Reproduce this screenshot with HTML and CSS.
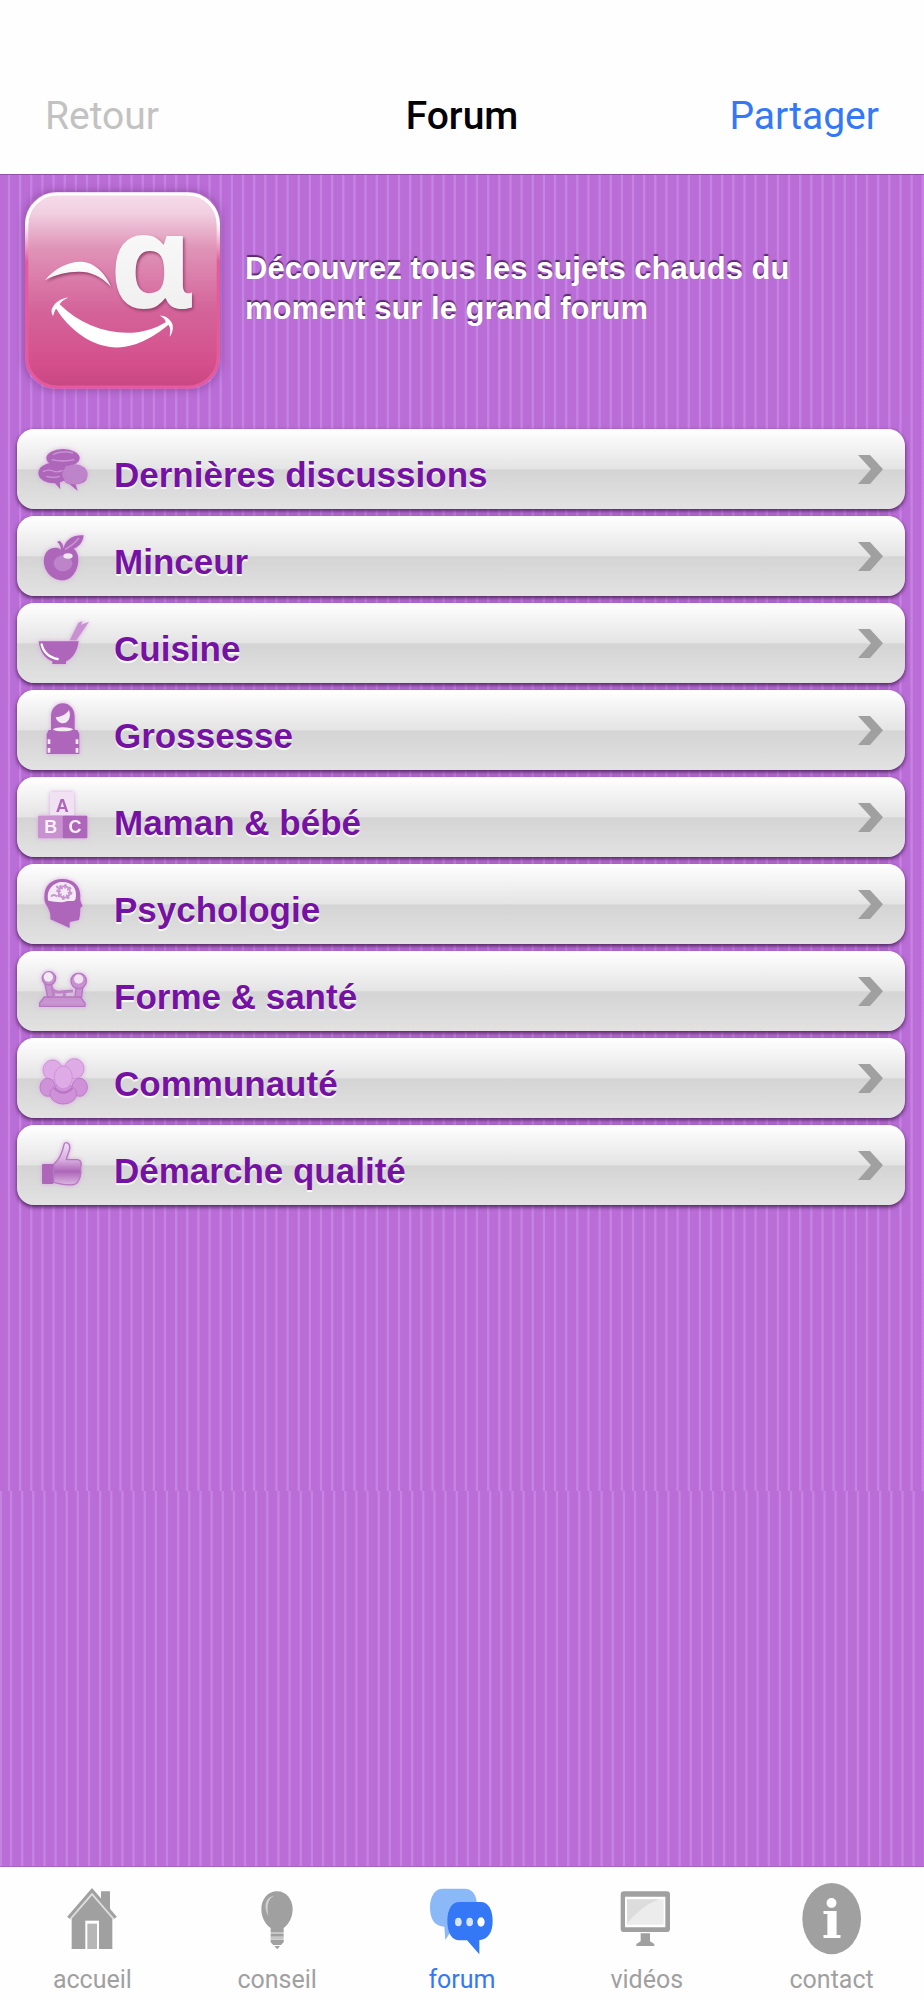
FILE: index.html
```html
<!DOCTYPE html>
<html lang="fr">
<head>
  <meta charset="UTF-8">
  <meta name="viewport" content="width=device-width, initial-scale=1">
  <title>Forum</title>
  <link rel="stylesheet" href="styles.css">
</head>
<body>
  <header class="navbar">
    <button class="nav-btn" type="button" disabled>Retour</button>
    <h1 class="nav-title">Forum</h1>
    <button class="nav-btn nav-share" type="button">Partager</button>
  </header>

  <main class="content">
    <div class="intro">
      <svg class="logo" viewBox="0 0 585 590" aria-hidden="true">
        <defs>
          <linearGradient id="pink" x1="0" y1="0" x2="0" y2="1">
            <stop offset="0" stop-color="#f6dcea"/>
            <stop offset=".1" stop-color="#f1cfe0"/>
            <stop offset=".28" stop-color="#e094b8"/>
            <stop offset=".6" stop-color="#d4649a"/>
            <stop offset=".88" stop-color="#d44f8c"/>
            <stop offset="1" stop-color="#c84782"/>
          </linearGradient>
          <linearGradient id="edge" x1="0" y1="0" x2="0" y2="1">
            <stop offset="0" stop-color="#fff"/>
            <stop offset=".15" stop-color="#fff"/>
            <stop offset=".35" stop-color="#e45a9d"/>
            <stop offset="1" stop-color="#e45a9d"/>
          </linearGradient>
          <linearGradient id="letter" x1="0" y1="0" x2="0" y2="1">
            <stop offset="0" stop-color="#fff"/>
            <stop offset="1" stop-color="#ececec"/>
          </linearGradient>
        </defs>
        <rect x="5" y="5" width="575" height="580" rx="92" fill="url(#pink)" stroke="url(#edge)" stroke-width="10"/>
        <g class="face" fill="url(#letter)">
          <text class="logo-letter" x="378" y="346">ɑ</text>
          <path d="M60 264C90 228 130 209 166 209C205 209 240 240 258 284C225 250 195 238 160 239C125 240 95 246 60 264Z"/>
        </g>
        <path fill="#fff" d="M130 316C112 318 92 328 84 344C78 352 78 362 84 372C88 360 90 352 94 350C130 410 200 466 276 466C340 466 400 424 430 398C438 408 436 420 434 434C446 418 446 398 438 388C430 376 418 370 404 370C414 376 422 382 422 390C390 410 350 422 306 422C230 420 160 392 104 336C108 328 118 322 130 316Z"/>
      </svg>
      <p class="intro-text">Découvrez tous les sujets chauds du moment sur le grand forum</p>
    </div>

    <ul class="list">
      <li><a class="row" href="#discussions">
        <svg class="icon" viewBox="0 0 156 240" aria-hidden="true">
          <ellipse cx="78" cy="87" rx="50" ry="27"/>
          <path d="M38 98l-2 16 20-10z"/>
          <ellipse cx="50" cy="132" rx="46" ry="31"/>
          <path d="M48 156l22 25-2-24z"/>
          <ellipse class="soft" cx="114" cy="136" rx="38" ry="30"/>
          <path d="M76 140c8 34 62 34 76 0-4 12-4 22-36 26l6 20-24-20c-14-4-20-12-22-26z"/>
          <path class="line" d="M48 76q28-12 60-4M44 92q34 8 68 0M18 128q16-8 30-2t28-2M28 142q22 6 40 0"/>
        </svg>
        <span class="label">Dernières discussions</span>
        <svg class="chevron" viewBox="0 0 75 87" aria-hidden="true"><path d="M0 0h36l39 43-39 44H0l39-44z"/></svg>
      </a></li>
      <li><a class="row" href="#minceur">
        <svg class="icon" viewBox="0 0 156 240" aria-hidden="true">
          <path d="M72 101c12-12 38-12 48 10 12 28-4 82-44 82-40 0-62-42-54-70 6-26 34-34 50-22z"/>
          <path d="M78 104C82 74 104 56 140 58C138 86 116 104 78 104ZM60 78l8-4c10 8 12 18 10 30l-6-2c0-10-4-18-12-24z"/>
          <path class="line" d="M84 100q24-12 42-34"/>
          <ellipse class="soft" cx="78" cy="142" rx="28" ry="24"/>
          <ellipse class="shine" cx="93" cy="120" rx="14" ry="8"/>
        </svg>
        <span class="label">Minceur</span>
        <svg class="chevron" viewBox="0 0 75 87" aria-hidden="true"><path d="M0 0h36l39 43-39 44H0l39-44z"/></svg>
      </a></li>
      <li><a class="row" href="#cuisine">
        <svg class="icon" viewBox="0 0 156 240" aria-hidden="true">
          <path d="M5 115h120c-4 32-20 54-38 60v8H46v-8C22 166 8 144 5 115z"/>
          <path class="mid" d="M98 112L124 60l12-6-4 12 24-10-38 56z"/>
          <path class="bowl-shine" d="M14 124c4 22 22 40 48 44"/>
        </svg>
        <span class="label">Cuisine</span>
        <svg class="chevron" viewBox="0 0 75 87" aria-hidden="true"><path d="M0 0h36l39 43-39 44H0l39-44z"/></svg>
      </a></li>
      <li><a class="row" href="#grossesse">
        <svg class="icon" viewBox="0 0 156 240" aria-hidden="true">
          <path d="M42 120V80c0-54 71-54 71 0v40h8l6 12v60H29v-60l6-12z"/>
          <path class="light" d="M56 82c18-2 32-10 40-22 8 20-2 40-18 40-10 0-20-8-22-18z"/>
          <ellipse class="light" cx="78" cy="118" rx="30" ry="6"/>
          <path class="light" d="M32 148h8v14h-8zM32 174h8v14h-8zM116 148h8v14h-8zM116 174h8v14h-8z"/>
        </svg>
        <span class="label">Grossesse</span>
        <svg class="chevron" viewBox="0 0 75 87" aria-hidden="true"><path d="M0 0h36l39 43-39 44H0l39-44z"/></svg>
      </a></li>
      <li><a class="row" href="#maman">
        <svg class="icon" viewBox="0 0 156 240" aria-hidden="true">
          <rect class="pale" x="39" y="45" width="72" height="70" rx="3"/>
          <rect class="mid" x="3" y="116" width="74" height="68" rx="3"/>
          <rect x="77" y="116" width="74" height="68" rx="3"/>
          <text class="cube" x="76" y="104">A</text>
          <text class="cube white" x="41" y="168">B</text>
          <text class="cube white" x="114" y="168">C</text>
        </svg>
        <span class="label">Maman &amp; bébé</span>
        <svg class="chevron" viewBox="0 0 75 87" aria-hidden="true"><path d="M0 0h36l39 43-39 44H0l39-44z"/></svg>
      </a></li>
      <li><a class="row" href="#psychologie">
        <svg class="icon" viewBox="0 0 156 240" aria-hidden="true">
          <path d="M22 98C22 62 46 45 76 45C108 45 130 64 130 96C128 108 132 118 137 126L130 132C130 150 128 160 126 168L98 174V192L40 166C42 148 36 138 30 126C24 118 22 110 22 98Z"/>
          <path class="light" d="M34 110C26 78 50 54 76 54C106 54 122 74 116 104C112 116 98 108 88 112C74 118 50 112 34 110Z"/>
          <circle class="gear" cx="82" cy="84" r="17"/>
          <circle class="gear-dots" cx="82" cy="84" r="17"/>
          <path class="gear" d="M42 98q8-10 18 0M58 66l8 8"/>
        </svg>
        <span class="label">Psychologie</span>
        <svg class="chevron" viewBox="0 0 75 87" aria-hidden="true"><path d="M0 0h36l39 43-39 44H0l39-44z"/></svg>
      </a></li>
      <li><a class="row" href="#forme">
        <svg class="icon" viewBox="0 0 156 240" aria-hidden="true">
          <path class="mid edge" d="M22 138h108l14 18v10H8v-10z"/>
          <path class="mid edge" d="M24 100l8 38h16L44 96zM118 104l-4 34h20l4-34z"/>
          <path class="bar" d="M44 112q12 16 34 10l30-2M50 122v16M82 122v16"/>
          <circle class="mid edge" cx="36" cy="82" r="20"/>
          <circle class="light" cx="34" cy="78" r="14"/>
          <circle class="mid edge" cx="125" cy="90" r="23"/>
          <circle class="pale" cx="125" cy="84" r="14"/>
          <path class="line" d="M18 154h116"/>
        </svg>
        <span class="label">Forme &amp; santé</span>
        <svg class="chevron" viewBox="0 0 75 87" aria-hidden="true"><path d="M0 0h36l39 43-39 44H0l39-44z"/></svg>
      </a></li>
      <li><a class="row" href="#communaute">
        <svg class="icon people" viewBox="0 0 156 240" aria-hidden="true">
          <ellipse cx="47" cy="96" rx="29" ry="30"/>
          <ellipse cx="112" cy="92" rx="29" ry="30"/>
          <ellipse class="deep" cx="32" cy="148" rx="23" ry="27"/>
          <ellipse class="deep" cx="128" cy="148" rx="23" ry="27"/>
          <ellipse class="deep" cx="79" cy="168" rx="40" ry="30"/>
          <ellipse cx="79" cy="118" rx="27" ry="34"/>
          <path class="lip" d="M52 150q27 28 54 0"/>
        </svg>
        <span class="label">Communauté</span>
        <svg class="chevron" viewBox="0 0 75 87" aria-hidden="true"><path d="M0 0h36l39 43-39 44H0l39-44z"/></svg>
      </a></li>
      <li><a class="row" href="#qualite">
        <svg class="icon" viewBox="0 0 156 240" aria-hidden="true">
          <defs>
            <linearGradient id="thumb" x1="0" y1="0" x2="0" y2="1">
              <stop offset="0" stop-color="#f0e0f3"/>
              <stop offset=".4" stop-color="#d9b0df"/>
              <stop offset=".68" stop-color="#ad66b9"/>
              <stop offset="1" stop-color="#dcb8e2"/>
            </linearGradient>
          </defs>
          <rect x="15" y="117" width="34" height="60" rx="3"/>
          <path class="edge" fill="url(#thumb)" d="M50 118C66 106 76 84 82 56C88 48 100 56 98 70C96 84 90 92 88 104H122C134 106 134 118 131 126C134 146 128 174 112 178C90 184 66 176 50 172Z"/>
        </svg>
        <span class="label">Démarche qualité</span>
        <svg class="chevron" viewBox="0 0 75 87" aria-hidden="true"><path d="M0 0h36l39 43-39 44H0l39-44z"/></svg>
      </a></li>
    </ul>
  </main>

  <nav class="tabs">
    <a class="tab" href="#accueil">
      <svg class="tab-icon" viewBox="0 0 240 270" aria-hidden="true">
        <path d="M147 110V73h27v62zM120 70l68 80h-7v96H59v-96h-7z"/>
        <path class="roof-gap" d="M54 156l66-76 66 76"/>
        <path class="roof" d="M49 152l71-82 71 82"/>
        <path fill="#fff" d="M100 161h41v86h-41z"/>
        <path fill="#b6b6b6" d="M106 170h29v76h-29z"/>
      </svg>
      <span>accueil</span>
    </a>
    <a class="tab" href="#conseil">
      <svg class="tab-icon" viewBox="0 0 240 270" aria-hidden="true">
        <path d="M120 73c28 0 47 24 47 54 0 28-15 48-27 56v12h-39v-12c-13-8-28-28-28-56 0-30 19-54 47-54z"/>
        <path d="M101 201h39v8h-39zM101 218h39v8l-8 8h-23l-8-8zM112 237h17l-8 10z"/>
        <path fill="#c6c6c6" d="M101 195h39v6h-39zM101 209h39v9h-39z"/>
        <path fill="#d0d0d0" d="M112 86c-16 6-24 26-18 60-14-22-12-56 18-60z"/>
      </svg>
      <span>conseil</span>
    </a>
    <a class="tab active" href="#forum">
      <svg class="tab-icon" viewBox="0 0 240 270" aria-hidden="true">
        <path fill="#8bb9f8" d="M62 65h66c22 0 37 18 37 50 0 40-15 64-42 64H96l-26 40-3-40C40 178 24 158 24 122 24 86 40 65 62 65z"/>
        <path d="M112 105h64c22 0 36 22 36 57s-14 54-40 58v42l-37-42h-23c-22 0-36-22-36-58s14-57 36-57z"/>
        <ellipse fill="#d6e6ff" cx="109" cy="165" rx="10" ry="13"/>
        <ellipse fill="#d6e6ff" cx="143" cy="165" rx="10" ry="13"/>
        <ellipse fill="#fff" cx="177" cy="165" rx="11" ry="14"/>
      </svg>
      <span>forum</span>
    </a>
    <a class="tab" href="#videos">
      <svg class="tab-icon" viewBox="0 0 240 270" aria-hidden="true">
        <rect x="41" y="73" width="148" height="122" rx="10"/>
        <path fill="#fff" d="M54 89h121v92H54z"/>
        <path fill="#ececec" d="M60 97h110v76H60z"/>
        <path fill="#dcdcdc" d="M60 97h96q-50 18-96 72z"/>
        <path d="M101 199h28v24l13 8v6H88v-6l13-8z"/>
      </svg>
      <span>vidéos</span>
    </a>
    <a class="tab" href="#contact">
      <svg class="tab-icon" viewBox="0 0 240 270" aria-hidden="true">
        <ellipse cx="119" cy="155" rx="88" ry="107"/>
        <text class="info" x="119" y="213">i</text>
      </svg>
      <span>contact</span>
    </a>
  </nav>
</body>
</html>
```
FILE: styles.css
```css
* {
  box-sizing: border-box;
}

body {
  display: flex;
  flex-direction: column;
  min-height: 100vh;
  margin: 0;
  background-color: #fefefe;
  font-family: "Liberation Sans", Helvetica, Arial, sans-serif;
}

a {
  text-decoration: none;
}

/* top bar */
.navbar {
  display: grid;
  grid-template-columns: 1fr auto 1fr;
  align-items: center;
  padding: 92px 45px 34px;
  font-family: Roboto, sans-serif;
  line-height: 48px;
}

.nav-title {
  margin: 0;
  font-size: 39px;
  font-weight: 500;
  color: #000;
}

.nav-btn {
  justify-self: start;
  padding: 0;
  border: 0;
  background: none;
  font: inherit;
  font-size: 39px;
  color: #c2c2c2;
}

.nav-share {
  justify-self: end;
  color: #3478f6;
}

/* striped area, the pattern starts again after 1316px, a little to the right */
.content {
  --stripes: repeating-linear-gradient(90deg, #ba6dd7 0, #ba6dd7 0.8%, #c583e2 0.9%, #c583e2 1.05%, #ba6dd7 1.15%, #ba6dd7 1.206%);
  flex: 1;
  padding: 17px 19px 40px 17px;
  border-top: 1px solid #9350ad;
  border-bottom: 1px solid #a566c0;
  background-color: #ba6dd7;
  background-image: var(--stripes), var(--stripes);
  background-position: 0 0, 2px 0;
  background-size: 100% 1316px, 100% 100%;
  background-repeat: no-repeat, repeat-x;
}

.intro {
  display: flex;
  align-items: center;
  gap: 25px;
  padding: 0 60px 0 8px;
}

.logo {
  flex: none;
  width: 195px;
  height: 197px;
  overflow: visible;
  border-radius: 30px;
  box-shadow: 0 0 10px #8a4a9c;
}

.face {
  filter: drop-shadow(4px 6px 4px #96406c);
}

.logo-letter {
  font-family: "Noto Sans", sans-serif;
  font-size: 395px;
  font-weight: bold;
  text-anchor: middle;
}

.intro-text {
  margin: 0;
  padding-bottom: 4px;
  font-size: 31px;
  font-weight: bold;
  line-height: 40px;
  color: #fff;
  text-shadow: 0 -2px 1px #5a2a6c;
}

.list {
  display: flex;
  flex-direction: column;
  gap: 7px;
  margin: 40px 0 0;
  padding: 0;
  list-style: none;
}

.row {
  display: flex;
  align-items: center;
  height: 80px;
  padding: 0 22px 0 20px;
  border-radius: 17px;
  background: linear-gradient(#fff, #e4e4e4 50%, #d4d4d4 51%, #e2e2e2);
  box-shadow: 0 2px 4px #4a2058;
}

.label {
  flex: 1;
  padding: 11px 0 0 25px;
  font-size: 35px;
  font-weight: bold;
  line-height: 40px;
  color: #7612a3;
  text-shadow: 0 2px 1px #fff;
}

.chevron {
  width: 25px;
  height: 29px;
  fill: #a0a0a0;
}

/* row icons */
.icon {
  width: 52px;
  height: 80px;
  fill: #ad66b9;
  filter: drop-shadow(0 0 2px #d9a8e0);
}

.mid {
  fill: #c891d0;
}

.pale {
  fill: #f0e2f3;
}

.light {
  fill: #f3eaf5;
}

.soft {
  fill: #be84c9;
}

.shine {
  fill: #f2e6f5;
}

.edge {
  stroke: #b577c1;
  stroke-width: 4;
}

.line {
  fill: none;
  stroke: #cb98d3;
  stroke-width: 4;
}

.bowl-shine {
  fill: none;
  stroke: #fff;
  stroke-width: 7;
  stroke-linecap: round;
}

.cube {
  font-size: 54px;
  font-weight: bold;
  text-anchor: middle;
}

.white {
  fill: #f8f0fa;
}

.gear {
  fill: none;
  stroke: #c994d1;
  stroke-width: 6;
}

.gear-dots {
  fill: none;
  stroke: #c994d1;
  stroke-width: 14;
  stroke-dasharray: 6 7;
}

.bar {
  fill: none;
  stroke: #bd83c7;
  stroke-width: 9;
}

.people {
  fill: #deabe6;
  stroke: #cf93d9;
  stroke-width: 3;
}

.people .deep {
  fill: #cf91d8;
  stroke: #be7bca;
}

.people .lip {
  fill: none;
  stroke: #ba74c6;
  stroke-width: 7;
}

/* bottom tabs */
.tabs {
  display: grid;
  grid-template-columns: repeat(5, 1fr);
  height: 133px;
}

.tab {
  display: flex;
  flex-direction: column;
  align-items: center;
  font-family: Roboto, sans-serif;
  font-size: 25px;
  line-height: 46px;
  color: #a0a0a0;
}

.tab-icon {
  flex: none;
  width: 80px;
  height: 90px;
  fill: #a0a0a0;
}

.tab span {
  height: 43px;
}

.roof,
.roof-gap {
  fill: none;
  stroke: #a0a0a0;
  stroke-width: 9;
}

.roof-gap {
  stroke: #dedede;
  stroke-width: 7;
}

.info {
  fill: #fff;
  font-family: "DejaVu Serif", serif;
  font-size: 158px;
  font-weight: bold;
  text-anchor: middle;
}

.active {
  color: #3478f6;
}

.active .tab-icon {
  fill: #3478f6;
}
```
